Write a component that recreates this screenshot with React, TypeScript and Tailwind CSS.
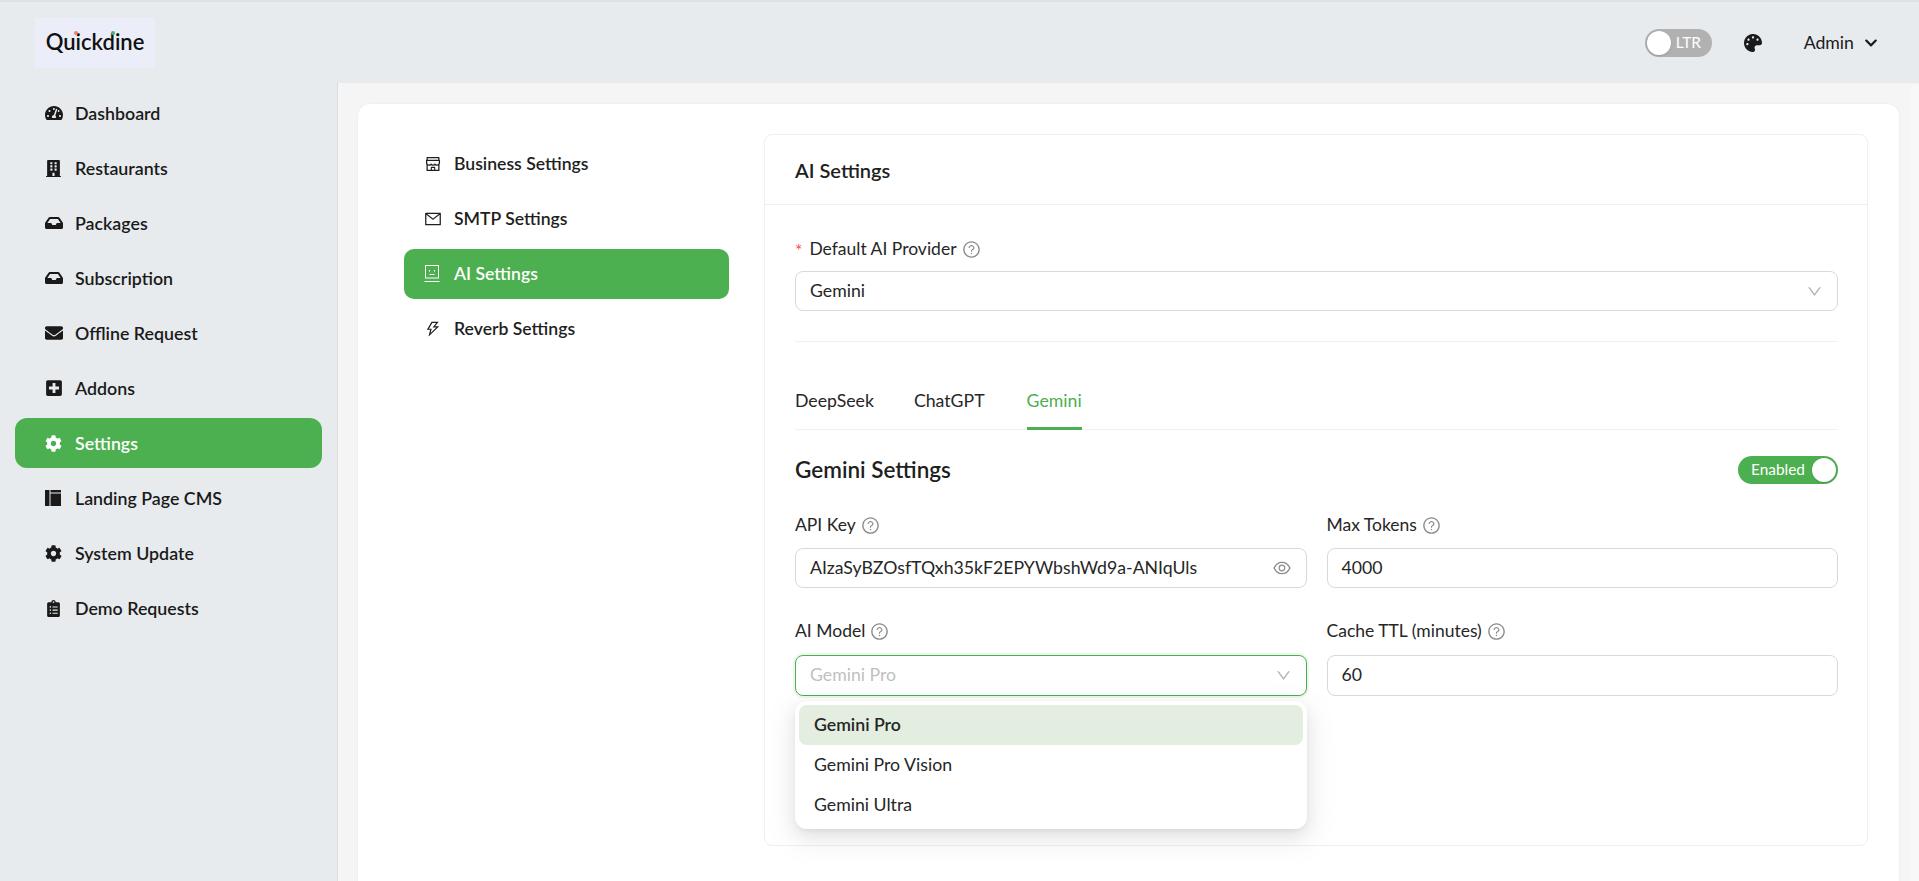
import React from "react";
import {
  FaTachometerAlt, FaBuilding, FaInbox, FaEnvelope, FaPlusSquare, FaCog, FaClipboardList, FaPalette, FaChevronDown,
} from "react-icons/fa";
import {
  AiOutlineShop, AiOutlineMail, AiOutlineThunderbolt, AiOutlineQuestionCircle, AiOutlineEye, AiOutlineDown,
} from "react-icons/ai";

// ── Drawn icons ───────────────────────────────────────────────────────────────
const LayoutIcon: React.FC = () => (
  <svg width="16" height="16" viewBox="0 0 16 16" fill="currentColor">
    <rect x="0" y="0" width="4.5" height="16" />
    <rect x="5.5" y="0" width="10.5" height="2.5" />
    <rect x="5.5" y="3.5" width="10.5" height="12.5" />
  </svg>
);

const BotIcon: React.FC = () => (
  <svg width="16" height="18" viewBox="0 0 16 18" fill="none" stroke="currentColor" strokeWidth="1">
    <rect x="1.5" y="0.5" width="13" height="12.5" />
    <path d="M0.5 16.5H15.5" />
    <path d="M5.5 5v1.5M10.5 5v1.5M5.5 9.5h5" />
  </svg>
);

const Help: React.FC = () => <AiOutlineQuestionCircle size={19} className="text-[#8c8c8c]" />;

// ── Sidebar ───────────────────────────────────────────────────────────────────
const MENU = [
  { label: "Dashboard", icon: <FaTachometerAlt size={18} /> },
  { label: "Restaurants", icon: <FaBuilding size={17} /> },
  { label: "Packages", icon: <FaInbox size={18} /> },
  { label: "Subscription", icon: <FaInbox size={18} /> },
  { label: "Offline Request", icon: <FaEnvelope size={18} /> },
  { label: "Addons", icon: <FaPlusSquare size={18} /> },
  { label: "Settings", icon: <FaCog size={17} />, active: true },
  { label: "Landing Page CMS", icon: <LayoutIcon /> },
  { label: "System Update", icon: <FaCog size={17} /> },
  { label: "Demo Requests", icon: <FaClipboardList size={17} /> },
];

const Sidebar: React.FC = () => (
  <aside className="w-[338px] shrink-0 border-r border-[#d9dde3] px-[15px] pt-[5px] flex flex-col gap-[5px]">
    {MENU.map((m) => (
      <div
        key={m.label}
        className={`h-[50px] rounded-xl flex items-center pl-[30px] text-[17.8px] font-semibold ${
          m.active ? "bg-[#4caf50] text-white" : "text-[#1a1a1a]"
        }`}
      >
        <span className="w-[30px] flex justify-start shrink-0">{m.icon}</span>
        {m.label}
      </div>
    ))}
  </aside>
);

// ── Settings nav ──────────────────────────────────────────────────────────────
const NAV = [
  { label: "Business Settings", icon: <AiOutlineShop size={18} /> },
  { label: "SMTP Settings", icon: <AiOutlineMail size={18} /> },
  { label: "AI Settings", icon: <BotIcon />, active: true },
  { label: "Reverb Settings", icon: <AiOutlineThunderbolt size={18} /> },
];

const SettingsNav: React.FC = () => (
  <nav className="w-[325px] shrink-0 flex flex-col gap-[5px] mr-[35px] mt-[5px]">
    {NAV.map((n) => (
      <div
        key={n.label}
        className={`h-[50px] rounded-[10px] flex items-center pl-[20px] text-[17.6px] font-semibold ${
          n.active ? "bg-[#4caf50] text-white" : "text-[#1f1f1f]"
        }`}
      >
        <span className="w-[30px] flex shrink-0">{n.icon}</span>
        {n.label}
      </div>
    ))}
  </nav>
);

// ── Form bits ─────────────────────────────────────────────────────────────────
const Field: React.FC<{ label: string; children: React.ReactNode }> = ({ label, children }) => (
  <div className="flex-1 min-w-0">
    <div className="h-[24px] flex items-center gap-[5px] text-[17.5px] text-[#262626] mb-[11px]">
      {label}
      <Help />
    </div>
    {children}
  </div>
);

const Box: React.FC<{ children: React.ReactNode }> = ({ children }) => (
  <div className="h-[40px] rounded-lg border border-[#d9d9d9] px-[14px] flex items-center justify-between text-[17.7px] text-[#262626] bg-white">
    {children}
  </div>
);

// ── AI panel ──────────────────────────────────────────────────────────────────
const AIPanel: React.FC = () => (
  <section className="flex-1 min-w-0 h-[712px] rounded-lg border border-[#f0f0f0] flex flex-col">
    <h2 className="h-[70px] shrink-0 border-b border-[#f0f0f0] px-[30px] flex items-center text-[20px] font-semibold text-[#1f1f1f]">
      AI Settings
    </h2>
    <div className="pl-[30px] pr-[29px] pt-[32px] flex flex-col">
      <div className="h-[24px] flex items-center gap-[5px] text-[17.5px] text-[#262626] mb-[10px]">
        <span className="text-[#ff4d4f] mr-[2px] translate-y-[2px]">*</span>
        Default AI Provider
        <Help />
      </div>
      <Box>
        Gemini
        <AiOutlineDown size={17} className="text-[#b5b5b5]" />
      </Box>
      <div className="h-px bg-[#f0f0f0] mt-[30px]" />

      <div className="flex gap-[40px] mt-[38px] border-b border-[#f0f0f0] text-[17.7px] text-[#262626] h-[50px]">
        <span className="pt-[8px]">DeepSeek</span>
        <span className="pt-[8px]">ChatGPT</span>
        <span className="pt-[8px] ml-[2px] text-[#4caf50] h-[50px] border-b-[3px] border-[#4caf50]">Gemini</span>
      </div>

      <div className="flex items-center justify-between mt-[24px] h-[32px]">
        <h3 className="text-[22.5px] font-semibold text-[#1f1f1f]">Gemini Settings</h3>
        <div className="w-[100px] h-[28px] rounded-full bg-[#4caf50] flex items-center justify-between pl-[13px] pr-[2px] text-[15.4px] text-white">
          Enabled
          <span className="w-[24px] h-[24px] rounded-full bg-white shadow" />
        </div>
      </div>

      <div className="flex gap-[20px] mt-[27px]">
        <Field label="API Key">
          <Box>
            AIzaSyBZOsfTQxh35kF2EPYWbshWd9a-ANIqUls
            <AiOutlineEye size={20} className="text-[#8c8c8c]" />
          </Box>
        </Field>
        <Field label="Max Tokens">
          <Box>4000</Box>
        </Field>
      </div>

      <div className="flex gap-[20px] mt-[31px]">
        <Field label="AI Model">
          <div className="relative mt-[12px]">
            <div className="h-[41px] rounded-lg border border-[#4caf50] shadow-[0_0_0_2px_rgba(76,175,80,0.1)] px-[14px] flex items-center justify-between text-[17.7px] text-[#bfbfbf] bg-white">
              Gemini Pro
              <AiOutlineDown size={17} className="text-[#b5b5b5]" />
            </div>
            <div className="absolute left-0 right-0 top-[46px] z-10 rounded-xl bg-white p-[4px] shadow-[0_6px_16px_rgba(0,0,0,0.08),0_3px_6px_-4px_rgba(0,0,0,0.12),0_9px_28px_8px_rgba(0,0,0,0.05)] text-[17.7px] text-[#262626]">
              <div className="h-[40px] rounded-lg bg-[#e3eee1] px-[15px] flex items-center font-semibold">Gemini Pro</div>
              <div className="h-[40px] px-[15px] flex items-center">Gemini Pro Vision</div>
              <div className="h-[40px] px-[15px] flex items-center">Gemini Ultra</div>
            </div>
          </div>
        </Field>
        <Field label="Cache TTL (minutes)">
          <div className="mt-[12px] h-[41px] rounded-lg border border-[#d9d9d9] px-[14px] flex items-center text-[17.7px] text-[#262626] bg-white">
            60
          </div>
        </Field>
      </div>
    </div>
  </section>
);

// ── Page ──────────────────────────────────────────────────────────────────────
export default function App() {
  return (
    <div className="h-[881px] overflow-hidden flex flex-col bg-[#e8ebee] border-t-2 border-[#e0e0e0] font-[Lato,sans-serif]">
      <header className="h-[81px] shrink-0 flex items-center justify-between pl-[35px] pr-[41px]">
        <div className="relative w-[120px] h-[50px] bg-[#ebeef8] flex items-center justify-center pb-[2px] text-[22px] font-semibold text-[#111]">
          Quickdine
          <span className="absolute left-[39px] top-[13px] w-[4px] h-[4px] rounded-full bg-[#f0845c]" />
          <span className="absolute left-[76px] top-[13px] w-[4px] h-[4px] rounded-full bg-[#3dba6f]" />
        </div>
        <div className="flex items-center text-[#1a1a1a]">
          <div className="w-[67px] h-[28px] rounded-full bg-[#b1b1b1] flex items-center pl-[2px] gap-[5px] text-[15.5px] text-white">
            <span className="w-[24px] h-[24px] rounded-full bg-white shadow" />
            LTR
          </div>
          <FaPalette size={18} className="ml-[32px]" />
          <span className="ml-[42px] text-[17.7px] pt-[1px]">Admin</span>
          <FaChevronDown size={14} className="ml-[10px]" />
        </div>
      </header>
      <div className="flex-1 flex min-h-0">
        <Sidebar />
        <main className="flex-1 bg-[#f5f5f5] pl-[20px] pt-[21px] min-w-0 flex">
          <div className="flex-1 min-w-0 bg-white rounded-xl h-[900px] pl-[46px] pr-[31px] pt-[30px] flex items-start shadow-[0_0_3px_rgba(0,0,0,0.06)]">
            <SettingsNav />
            <AIPanel />
          </div>
          <div className="w-[9px] ml-[11px] -mt-[19px] h-[900px] bg-[#f8f8f8] rounded-t" />
        </main>
      </div>
    </div>
  );
}
